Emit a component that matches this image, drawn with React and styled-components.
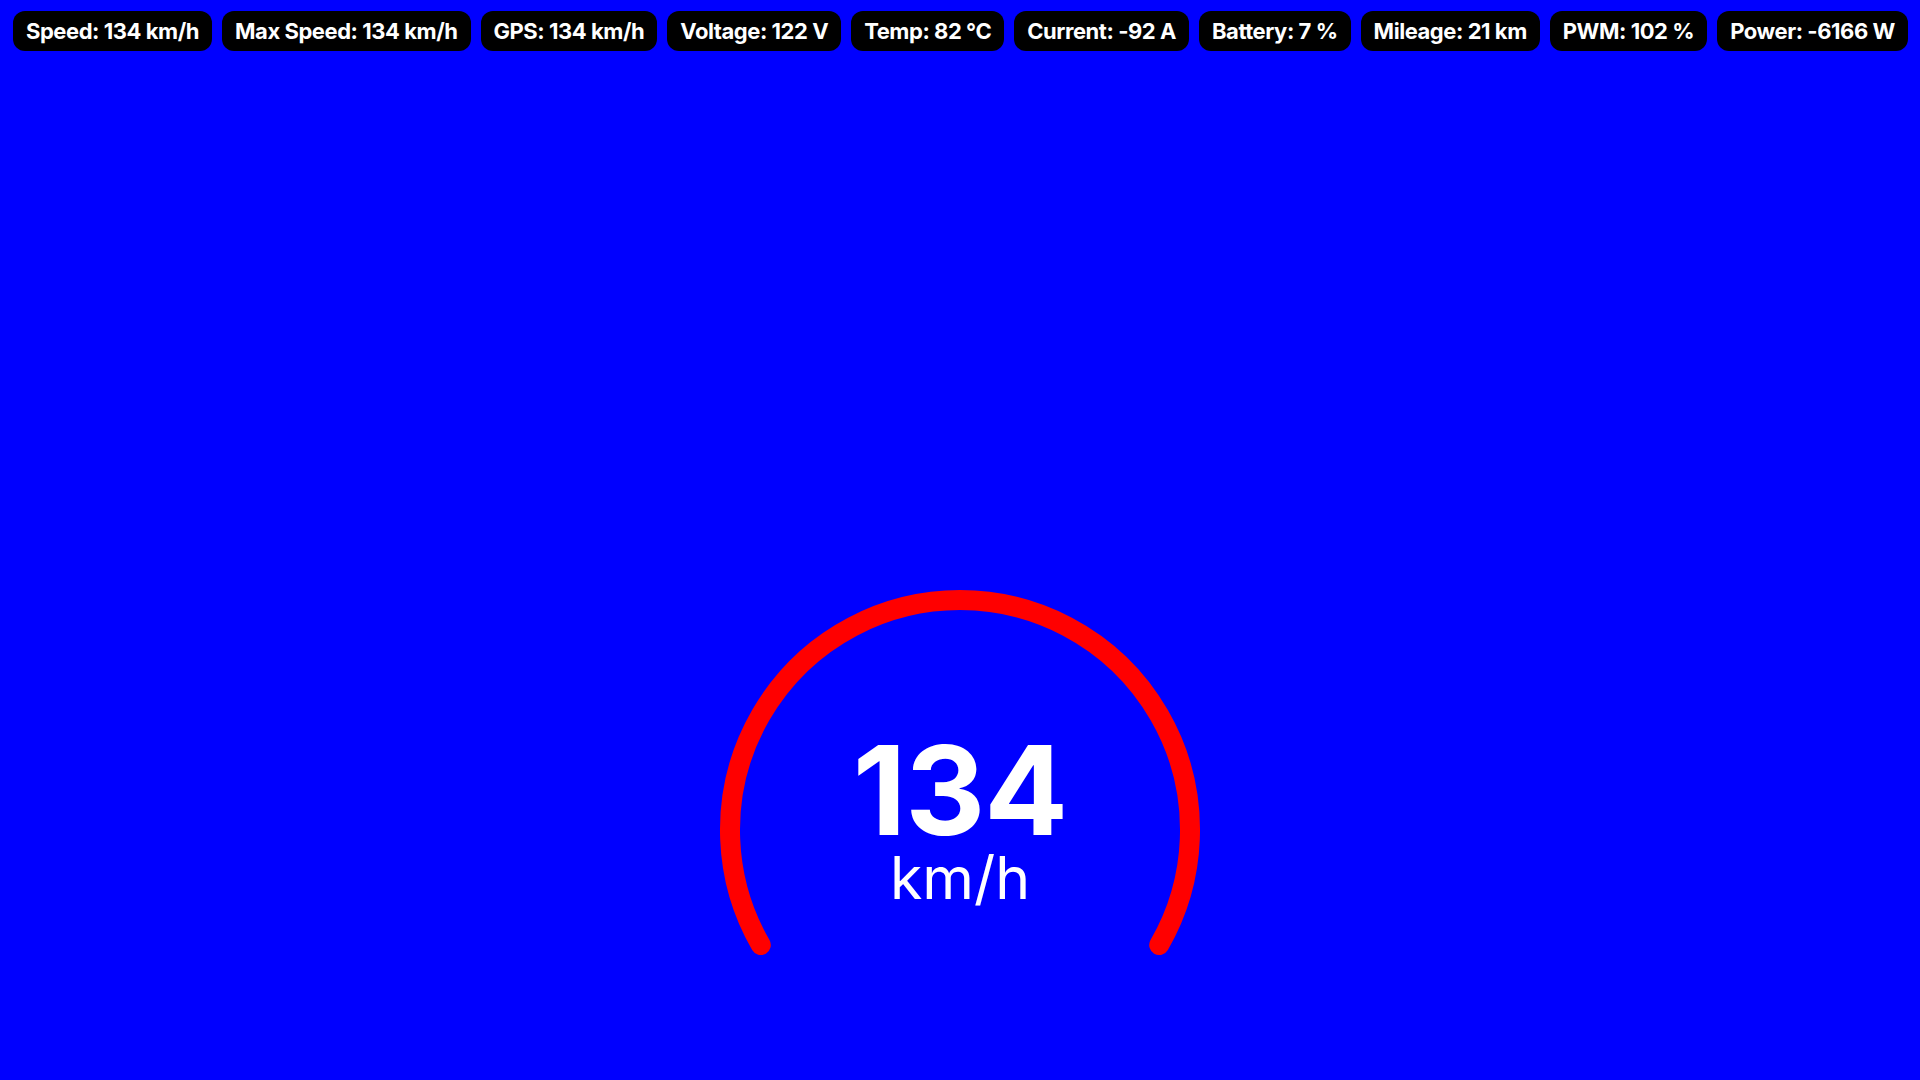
import React from 'react';
import styled, { createGlobalStyle } from 'styled-components';

const GlobalStyle = createGlobalStyle`
  html, body {
    margin: 0;
    padding: 0;
    background: #0000ff;
  }
  body {
    font-family: 'Inter', 'Liberation Sans', sans-serif;
  }
`;

const Screen = styled.div`
  display: flex;
  flex-direction: column;
  width: 1920px;
  height: 1080px;
  background: #0000ff;
  overflow: hidden;
`;

const StatsBar = styled.div`
  display: flex;
  gap: 10px;
  padding: 11px 13px 0;
`;

const Stat = styled.div`
  display: flex;
  align-items: center;
  height: 40px;
  padding: 0 13px;
  border-radius: 12px;
  background: #000;
  color: #fff;
  font: 700 22px/1 'Inter', sans-serif;
  letter-spacing: -0.45px;
  white-space: nowrap;
`;

const Main = styled.div`
  flex: 1;
  display: flex;
  justify-content: center;
  padding-top: 519px;
`;

const Gauge = styled.div`
  display: grid;
  width: 520px;
  height: 520px;

  & > * {
    grid-area: 1 / 1;
  }
`;

const Readout = styled.div`
  display: flex;
  flex-direction: column;
  align-items: center;
  justify-content: center;
  padding-bottom: 18px;
  color: #fff;
`;

const Value = styled.div`
  font: 700 124px/0.9 'Inter', sans-serif;
  letter-spacing: -1px;
`;

const Unit = styled.div`
  margin-top: 1px;
  font: 400 59px/1 'Inter', sans-serif;
`;

const stats = [
  ['Speed', '134 km/h'],
  ['Max Speed', '134 km/h'],
  ['GPS', '134 km/h'],
  ['Voltage', '122 V'],
  ['Temp', '82 °C'],
  ['Current', '-92 A'],
  ['Battery', '7 %'],
  ['Mileage', '21 km'],
  ['PWM', '102 %'],
  ['Power', '-6166 W'],
];

function SpeedArc({ size = 520, radius = 230, stroke = 20, color = '#ff0000' }) {
  const c = size / 2;
  const dx = radius * Math.cos(Math.PI / 6);
  const dy = radius * Math.sin(Math.PI / 6);
  const d = `M ${c - dx} ${c + dy} A ${radius} ${radius} 0 1 1 ${c + dx} ${c + dy}`;
  return (
    <svg width={size} height={size} viewBox={`0 0 ${size} ${size}`}>
      <path d={d} fill="none" stroke={color} strokeWidth={stroke} strokeLinecap="round" />
    </svg>
  );
}

export default function App() {
  return (
    <Screen>
      <GlobalStyle />
      <StatsBar>
        {stats.map(([label, value]) => (
          <Stat key={label}>{label}: {value}</Stat>
        ))}
      </StatsBar>
      <Main>
        <Gauge>
          <SpeedArc />
          <Readout>
            <Value>134</Value>
            <Unit>km/h</Unit>
          </Readout>
        </Gauge>
      </Main>
    </Screen>
  );
}
